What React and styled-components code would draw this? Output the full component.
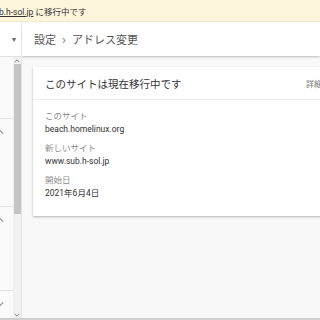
import React from 'react';
import styled, { createGlobalStyle } from 'styled-components';

const GlobalStyle = createGlobalStyle`
  html, body {
    margin: 0;
    padding: 0;
    background: #f8f8f8;
  }
  body {
    font-family: Roboto, "Noto Sans CJK JP", sans-serif;
  }
`;

// small chevron used by the sidebar and the scrollbar
const Chevron = ({ dir = 'up', size = 6, color = '#777' }) => (
  <svg width={size} height={size} viewBox="0 0 10 10">
    <polyline
      points={dir === 'up' ? '1,7 5,3 9,7' : '1,3 5,7 9,3'}
      fill="none"
      stroke={color}
      strokeWidth="1.3"
    />
  </svg>
);

const sections = [
  { height: 62, chevron: null },
  { height: 88, chevron: 'up' },
  { height: 84, chevron: 'up' },
  { height: 0, chevron: 'down' },
];

const fields = [
  { label: 'このサイト', value: 'beach.homelinux.org' },
  { label: '新しいサイト', value: 'www.sub.h-sol.jp' },
  { label: '開始日', value: '2021年6月4日' },
];

const App = () => (
  <>
    <GlobalStyle />
    <Page>
      <Banner>
        <BannerText>
          <a href="#">www.sub.h-sol.jp</a> に移行中です
        </BannerText>
      </Banner>
      <Body>
        <Sidebar>
          <SideTop>
            <Caret>▾</Caret>
          </SideTop>
          <SideBody>
            <NavList>
              {sections.map((s, i) => (
                <NavSection key={i} $height={s.height} $last={i === sections.length - 1}>
                  {s.chevron && (
                    <NavChevron>
                      <Chevron dir={s.chevron} size={8} color="#888" />
                    </NavChevron>
                  )}
                </NavSection>
              ))}
            </NavList>
            <Scrollbar>
              <ScrollArrow>
                <Chevron dir="up" size={6} color="#666" />
              </ScrollArrow>
              <Thumb />
              <ScrollTrack />
              <ScrollArrow>
                <Chevron dir="down" size={6} color="#666" />
              </ScrollArrow>
            </Scrollbar>
          </SideBody>
        </Sidebar>
        <Main>
          <Header>
            <Breadcrumb>
              設定<Sep>›</Sep>アドレス変更
            </Breadcrumb>
          </Header>
          <Content>
            <Card>
              <CardHeader>
                <CardTitle>このサイトは現在移行中です</CardTitle>
                <Detail>詳細</Detail>
              </CardHeader>
              <CardBody>
                {fields.map(f => (
                  <Field key={f.label}>
                    <Label>{f.label}</Label>
                    <Value>{f.value}</Value>
                  </Field>
                ))}
              </CardBody>
            </Card>
          </Content>
        </Main>
      </Body>
      <BottomBar />
    </Page>
  </>
);

const Page = styled.div`
  width: 320px;
  height: 320px;
  display: flex;
  flex-direction: column;
  overflow: hidden;
  background: #f8f8f8;
`;

const Banner = styled.div`
  height: 21px;
  flex-shrink: 0;
  display: flex;
  align-items: center;
  background: #fef5dd;
  border-bottom: 1px solid #f1ead2;
  overflow: hidden;
`;

const BannerText = styled.div`
  margin-left: -31px;
  font-size: 8.5px;
  color: #333;
  white-space: nowrap;

  a {
    color: #333;
    text-decoration: underline;
  }
`;

const Body = styled.div`
  flex: 1;
  display: flex;
  min-height: 0;
`;

const Sidebar = styled.div`
  width: 21px;
  flex-shrink: 0;
  display: flex;
  flex-direction: column;
  background: #fafafa;
  border-right: 1px solid #e4e4e4;
`;

const SideTop = styled.div`
  height: 34px;
  flex-shrink: 0;
  display: flex;
  align-items: center;
  justify-content: flex-end;
  padding-right: 5px;
  background: #fff;
  border-bottom: 1px solid #e0e0e0;
`;

const Caret = styled.span`
  font-size: 8px;
  color: #666;
`;

const SideBody = styled.div`
  flex: 1;
  display: flex;
  min-height: 0;
`;

const NavList = styled.div`
  flex: 1;
  display: flex;
  flex-direction: column;
  overflow: hidden;
`;

const NavSection = styled.div`
  height: ${p => (p.$last ? 'auto' : `${p.$height}px`)};
  flex-shrink: 0;
  border-bottom: ${p => (p.$last ? 'none' : '1px solid #e2e2e2')};
  padding-top: 9px;
  box-sizing: border-box;
`;

const NavChevron = styled.div`
  margin-left: -4px;
  line-height: 0;
`;

const Scrollbar = styled.div`
  width: 8px;
  display: flex;
  flex-direction: column;
  align-items: center;
  background: #f1f1f1;
`;

const ScrollArrow = styled.div`
  height: 7px;
  display: flex;
  align-items: center;
  justify-content: center;
`;

const Thumb = styled.div`
  width: 7px;
  height: 150px;
  background: #c4c4c4;
`;

const ScrollTrack = styled.div`
  flex: 1;
`;

const Main = styled.div`
  flex: 1;
  display: flex;
  flex-direction: column;
  min-width: 0;
  overflow: hidden;
`;

const Header = styled.div`
  height: 34px;
  flex-shrink: 0;
  display: flex;
  align-items: center;
  padding-left: 12px;
  background: #fff;
  box-shadow: 0 1px 2px rgba(0, 0, 0, 0.25);
  position: relative;
  z-index: 1;
`;

const Breadcrumb = styled.div`
  font-size: 11px;
  color: #555;
  white-space: nowrap;
`;

const Sep = styled.span`
  margin: 0 6px;
  font-size: 13px;
  color: #777;
`;

const Content = styled.div`
  flex: 1;
  padding: 11px 0 0 11px;
`;

const Card = styled.div`
  width: 300px;
  background: #fff;
  box-shadow: 0 1px 2px rgba(0, 0, 0, 0.28);
`;

const CardHeader = styled.div`
  height: 32px;
  display: flex;
  align-items: center;
  justify-content: space-between;
  padding: 0 11px 0 12px;
  border-bottom: 1px solid #ececec;
`;

const CardTitle = styled.div`
  font-size: 10.5px;
  color: #333;
  white-space: nowrap;
`;

const Detail = styled.div`
  font-size: 8px;
  color: #777;
`;

const CardBody = styled.div`
  padding: 10px 12px 16px;
  display: flex;
  flex-direction: column;
  gap: 6px;
`;

const Field = styled.div`
  display: flex;
  flex-direction: column;
`;

const Label = styled.div`
  font-size: 8.5px;
  line-height: 13px;
  color: #8c8c8c;
`;

const Value = styled.div`
  font-size: 8.5px;
  line-height: 13px;
  color: #333;
`;

const BottomBar = styled.div`
  height: 2px;
  flex-shrink: 0;
  background: #cfcfcf;
`;

export default App;
